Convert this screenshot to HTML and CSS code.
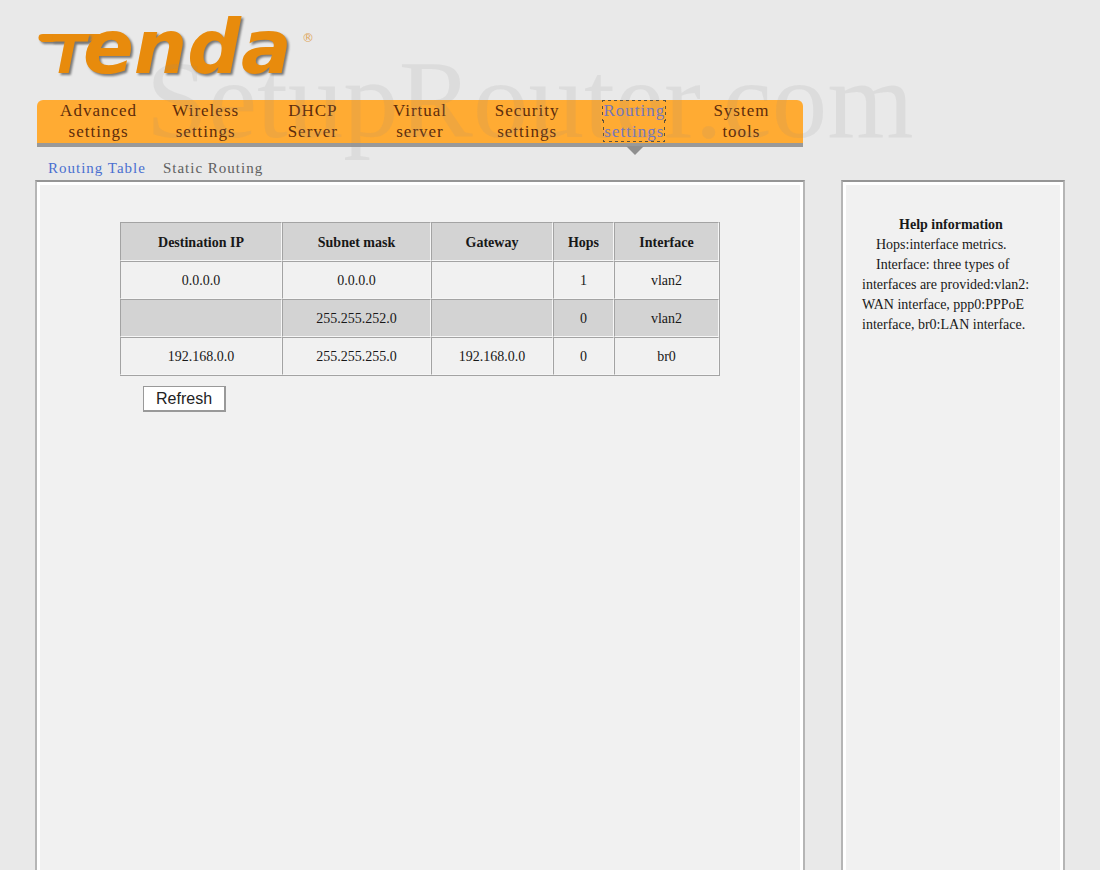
FILE: index.html
```html
<!DOCTYPE html>
<html lang="en">
<head>
<meta charset="utf-8">
<meta name="viewport" content="width=device-width, initial-scale=1">
<title>Tenda - Routing Table</title>
<link rel="stylesheet" href="styles.css">
</head>
<body>
<div class="page">
  <main class="main">
    <header class="header">
      <svg class="logo" width="300" height="86" viewBox="0 0 300 86" role="img" aria-label="Tenda">
        <path class="logo-bar" d="M4 40 Q2 34 8 34 H69 Q62 42 46 42 H7Z"/>
        <text class="logo-word" x="14" y="73"><tspan class="logo-cap">T</tspan><tspan class="logo-rest" x="48">enda</tspan></text>
        <text class="logo-mark" x="267" y="42">®</text>
      </svg>
    </header>
    <nav class="nav">
      <div class="nav-item"><a class="nav-link" href="#">Advanced<br>settings</a></div>
      <div class="nav-item"><a class="nav-link" href="#">Wireless<br>settings</a></div>
      <div class="nav-item"><a class="nav-link" href="#">DHCP<br>Server</a></div>
      <div class="nav-item"><a class="nav-link" href="#">Virtual<br>server</a></div>
      <div class="nav-item"><a class="nav-link" href="#">Security<br>settings</a></div>
      <div class="nav-item nav-item-current"><a class="nav-link" href="#">Routing<br>settings</a></div>
      <div class="nav-item"><a class="nav-link" href="#">System<br>tools</a></div>
    </nav>
    <nav class="subnav">
      <a class="subnav-link subnav-current" href="#">Routing Table</a>
      <a class="subnav-link" href="#">Static Routing</a>
    </nav>
    <section class="panel content">
      <table class="routes">
        <colgroup><col class="col-dest"><col class="col-mask"><col class="col-gate"><col class="col-hops"><col class="col-face"></colgroup>
        <thead>
          <tr><th>Destination IP</th><th>Subnet mask</th><th>Gateway</th><th>Hops</th><th>Interface</th></tr>
        </thead>
        <tbody>
          <tr><td>0.0.0.0</td><td>0.0.0.0</td><td></td><td>1</td><td>vlan2</td></tr>
          <tr class="shaded"><td></td><td>255.255.252.0</td><td></td><td>0</td><td>vlan2</td></tr>
          <tr><td>192.168.0.0</td><td>255.255.255.0</td><td>192.168.0.0</td><td>0</td><td>br0</td></tr>
        </tbody>
      </table>
      <button class="refresh" type="button">Refresh</button>
    </section>
  </main>
  <aside class="panel help">
    <h2 class="help-title">Help information</h2>
    <p class="help-text">Hops:interface metrics.</p>
    <p class="help-text">Interface: three types of interfaces are provided:vlan2: WAN interface, ppp0:PPPoE interface, br0:LAN interface.</p>
  </aside>
  <div class="watermark">SetupRouter.com</div>
</div>
</body>
</html>
```

FILE: styles.css
```css
* { box-sizing: border-box; }
body {
  margin: 0;
  background: #e9e9e9;
  color: #181818;
  font: 14px/20px "Liberation Serif", serif;
}
a { text-decoration: none; }
.page {
  position: relative;
  display: flex;
  gap: 36px;
  min-height: 100vh;
  padding: 0 35px;
  overflow: hidden;
}
.main {
  display: flex;
  flex: 1;
  flex-direction: column;
  min-width: 0;
}
.header { height: 100px; }
.logo { display: block; overflow: visible; }
.logo-word {
  font-family: "DejaVu Sans", sans-serif;
  font-weight: bold;
  font-style: oblique;
}
.logo-cap { font-size: 54px; }
.logo-rest { font-size: 75px; }
.logo-bar, .logo-word {
  fill: #e88b0c;
  filter: drop-shadow(2px 2px 1px #777);
}
.logo-mark { fill: #dfa75c; font: 12px "DejaVu Sans", sans-serif; }

.nav {
  display: flex;
  margin: 0 2px;
  padding: 0 8px;
  border-bottom: 4px solid #999;
  border-radius: 6px 6px 0 0;
  background: #ffab33;
}
.nav-item {
  position: relative;
  flex: 1;
  height: 43px;
  text-align: center;
  font-size: 17px;
  line-height: 21px;
  letter-spacing: 1px;
}
.nav-link { color: #5d2b0b; }
.nav-item-current .nav-link { color: #7476bd; outline: 1px dotted #5b513f; }
.nav-item-current::after {
  content: "";
  position: absolute;
  top: 46px;
  left: 50%;
  margin-left: -8px;
  border: 9px solid transparent;
  border-top-color: #8f8f8f;
  border-bottom: 0;
}
.subnav {
  display: flex;
  gap: 17px;
  height: 33px;
  padding: 11px 13px 0;
  font-size: 15px;
  letter-spacing: 1px;
}
.subnav-link { color: #606060; }
.subnav-current { color: #4a6fd0; }

.panel {
  border: 2px solid #b5b5b5;
  border-top-color: #959595;
  border-bottom: 0;
  background: #f1f1f1;
  box-shadow: inset 3px 3px #fff, inset -3px 0 #fff;
}
.content { flex: 1; padding: 40px 83px; }
.routes {
  width: 100%;
  table-layout: fixed;
  border: 1px solid #a3a3a3;
  border-width: 0 1px 1px 0;
  border-spacing: 0;
}
.col-dest { width: 162px; }
.col-mask { width: 149px; }
.col-gate { width: 122px; }
.col-hops { width: 61px; }
.routes th, .routes td {
  padding: 9px 0 7px;
  height: 38px;
  border: 1px solid #a3a3a3;
  border-right-color: #f6f6f6;
  border-bottom-color: #f6f6f6;
  text-align: center;
}
.routes th {
  height: 39px;
}
.routes th, .shaded { background: #d3d3d3; }
.refresh {
  display: block;
  margin: 10px 0 0 23px;
  padding: 0 12px;
  height: 26px;
  border: 1px solid #999;
  border-width: 1px 2px 2px 1px;
  background: #fff;
  color: #222;
  font: 16px/20px "Liberation Sans", sans-serif;
}
.help {
  flex: 0 0 224px;
  margin-top: 180px;
  padding: 32px 30px 0 19px;
}
.help-title {
  margin: 0 -7px 0 0;
  font-size: 14px;
  line-height: 21px;
  text-align: center;
}
.help-text { margin: 0; text-indent: 14px; }
.watermark {
  position: absolute;
  top: 40px;
  left: 146px;
  color: rgba(140, 140, 140, 0.13);
  font-size: 111px;
  line-height: 120px;
  white-space: nowrap;
  pointer-events: none;
}
```
